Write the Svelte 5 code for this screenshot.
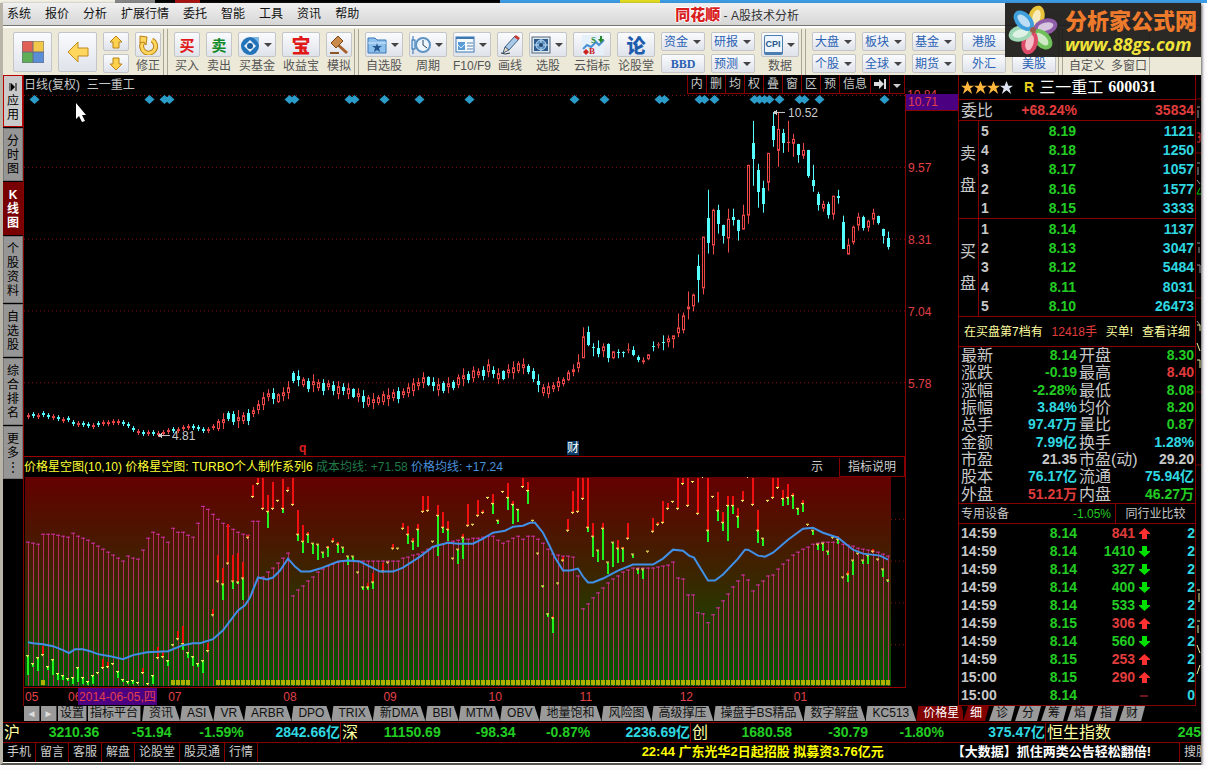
<script>
    const menus = ["系统", "报价", "分析", "扩展行情", "委托", "智能", "工具", "资讯", "帮助"];

    const tradeTools = [
        { icon: "buy", label: "买入" },
        { icon: "sell", label: "卖出" },
        { icon: "fund", label: "买基金", wide: true, drop: true },
        { icon: "bao", label: "收益宝", wide: true },
        { icon: "hammer", label: "模拟" },
    ];
    const viewTools = [
        { icon: "folder", label: "自选股", wide: true, drop: true },
        { icon: "clock", label: "周期", wide: true, drop: true },
        { icon: "news", label: "F10/F9", wide: true, drop: true },
        { icon: "pen", label: "画线" },
        { icon: "radar", label: "选股", wide: true, drop: true },
        { icon: "cloud", label: "云指标", wide: true },
        { icon: "lun", label: "论股堂", wide: true },
    ];
    const infoPairs = [
        [{ t: "资金", drop: true }, { t: "BBD", bold: true }],
        [{ t: "研报", drop: true }, { t: "预测", drop: true }],
    ];
    const marketPairs = [
        [{ t: "大盘", drop: true }, { t: "个股", drop: true }],
        [{ t: "板块", drop: true }, { t: "全球", drop: true }],
        [{ t: "基金", drop: true }, { t: "期货", drop: true }],
        [{ t: "港股" }, { t: "外汇" }],
        [{ t: "美股" }],
    ];

    const sideTabs = ["分时图", "K线图", "个股资料", "自选股", "综合排名", "更多⋮"];
    const chartButtons = ["内", "删", "均", "权", "叠", "窗", "区", "预", "信息"];
    const indicatorTabs = [
        "资讯", "ASI", "VR", "ARBR", "DPO", "TRIX", "新DMA", "BBI", "MTM", "OBV",
        "地量饱和", "风险图", "高级撑压", "操盘手BS精品", "数字解盘", "KC513", "价格星",
    ];
    const quoteTabs = ["细", "诊", "分", "筹", "焰", "指", "财"];

    const sells = [[5, "8.19", 1121], [4, "8.18", 1250], [3, "8.17", 1057], [2, "8.16", 1577], [1, "8.15", 3333]];
    const buys = [[1, "8.14", 1137], [2, "8.13", 3047], [3, "8.12", 5484], [4, "8.11", 8031], [5, "8.10", 26473]];

    const details = [
        ["最新", "8.14", "green", "开盘", "8.30", "green"],
        ["涨跌", "-0.19", "green", "最高", "8.40", "red"],
        ["涨幅", "-2.28%", "green", "最低", "8.08", "green"],
        ["振幅", "3.84%", "cyan", "均价", "8.20", "green"],
        ["总手", "97.47万", "cyan", "量比", "0.87", "green"],
        ["金额", "7.99亿", "cyan", "换手", "1.28%", "cyan"],
        ["市盈", "21.35", "grey", "市盈(动)", "29.20", "grey"],
        ["股本", "76.17亿", "cyan", "流通", "75.94亿", "cyan"],
        ["外盘", "51.21万", "red", "内盘", "46.27万", "green"],
    ];

    const ticks = [
        ["14:59", "8.14", 841, "up", 2],
        ["14:59", "8.14", 1410, "down", 2],
        ["14:59", "8.14", 327, "down", 2],
        ["14:59", "8.14", 400, "down", 2],
        ["14:59", "8.14", 533, "down", 2],
        ["14:59", "8.15", 306, "up", 2],
        ["14:59", "8.14", 560, "down", 2],
        ["14:59", "8.15", 253, "up", 2],
        ["15:00", "8.15", 290, "up", 2],
        ["15:00", "8.14", "", "flat", 0],
    ];

    const indexes = [
        ["沪", "3210.36", "-51.94", "-1.59%", "2842.66亿"],
        ["深", "11150.69", "-98.34", "-0.87%", "2236.69亿"],
        ["创", "1680.58", "-30.79", "-1.80%", "375.47亿"],
    ];
    const footLinks = ["手机", "留言", "客服", "解盘", "论股堂", "股灵通", "行情"];

    // price axis, y in plot units (plot starts at 94)
    const prices = [["9.57", 167], ["8.31", 239], ["7.04", 311], ["5.78", 383]];
    const months = [["05", 26], ["06", 69], ["07", 169], ["08", 284], ["09", 384], ["10", 489], ["11", 580], ["12", 680], ["01", 794]];
    const pct = (v, from, size) => `${((v - from) / size) * 100}%`;

    const px = (i) => 28 + i * 5;

    // quiet months: middle of each candle, negative when it closed down
    const quiet = [
        417, -416, 417, -415, -417, 418, -419, 421, -420, -424, 425, -425, -426, 427, -425, 424, 424, 423,
        423, -424, -426, -430, 433, -434, 434, -434, 435, 434, 432, -431, 431, 429, 428, -428, -429, -431,
        431, 428, 426, 422, -417, -419, 420, 419, -418, 413, 408, 402, 396, -397, 399, 395, 391, -378,
        -379, 383, -386, 384, 386, -388, 386, -389, 391, -390, 392, -394, 396, -400, 402, 402, 401, 399,
        398, 396, -396, 394, 391, 388, 385, 381, -382, -385, 388, -388, 386, -386, 382, 378, -378, 375,
        374, -374, 369, -373, 377, -376, 372, 371, 368, 367, -370, -376, -384, 391, 391, 388, 385,
    ].map((v, i) => {
        const y = Math.abs(v);
        const body = i < 38 ? 1 : 2 + (i % 3);
        const wick = i < 38 ? 3 : 5 + ((i * 7) % 5);
        return { up: v > 0, top: y - body, bottom: y + body, high: y - wick, low: y + wick };
    });

    // top bottom high low
    const busy = `r380 385 378 387|r373 381 371 382|r370 373 365 377|r363 369 355 373|r337 359 328 359|c333 346 327 347
|c348 349 344 357|c349 355 341 358|r347 352 344 358|c345 359 344 363|r352 359 352 360|c353 354 350 359|c353 354 352 358
|r350 351 344 354|c351 356 347 357|c358 361 356 363|r361 363 358 365|r355 360 355 361|c347 348 342 352|r345 346 343 349
|c343 344 336 351|r339 343 336 348|r336 340 336 349|r328 334 314 338|r316 331 313 334|r307 310 292 320|r295 307 294 312
|c266 281 255 303|r237 289 237 295|c218 243 190 254|r210 246 209 255|c210 224 205 234|c225 236 225 244|r219 239 209 253
|c217 220 209 226|c220 231 220 241|r215 230 205 230|r165 216 165 224|c143 159 121 186|c170 192 164 208|c188 204 181 213
|r153 183 153 191|c126 140 113 147|r129 151 113 167|c133 143 129 153|r142 143 121 152|r139 144 134 157|c144 155 144 163
|r150 156 143 159|c150 176 150 178|c180 186 165 192|c194 205 192 211|r204 209 201 212|c204 215 202 219|r196 215 196 220
|c196 198 190 204|c222 249 216 249|r245 255 239 255|r227 243 226 245|r217 226 213 231|c217 228 216 231|r221 228 220 232
|r213 220 209 225|c216 223 216 225|c229 236 229 244|c238 247 232 250`
        .split("|")
        .map((s) => {
            const [top, bottom, high, low] = s.trim().slice(1).split(" ").map(Number);
            return { up: s.trim()[0] === "r", top, bottom, high, low };
        });
    const candles = [...quiet, ...busy];

    const diamonds = [
        34, 149, 164, 169, 289, 294, 349, 354, 384, 419, 469, 574, 604, 659, 664, 699, 704, 714,
        754, 759, 764, 769, 779, 799, 804, 819, 884,
    ];

    // indicator values are kept in thirds of a unit
    const third = (v) => Math.round(v / 3);

    const cost = [
        260, 263, 266, 238, 238, 238, 241, 244, 247, 235, 244, 250, 256, 265, 274, 283, 292, 301, 310, 319,
        304, 310, 313, 286, 250, 230, 236, 247, 260, 220, 232, 232, 241, 247, 203, 154, 163, 178, 193, 205,
        214, 223, 232, 238, 241, 199, 197, 365, 352, 340, 325, 310, 295, 422, 406, 392, 377, 365, 352, 342,
        334, 328, 322, 319, 317, 317, 317, 317, 317, 317, 317, 317, 317, 317, 317, 310, 306, 301, 297, 290,
        282, 275, 269, 266, 262, 259, 256, 253, 253, 250, 250, 247, 244, 244, 256, 265, 259, 250, 244, 253,
        244, 244, 253, 265, 283, 298, 301, 304, 304, 307, 364, 463, 448, 430, 415, 400, 385, 373, 364, 352,
        344, 340, 340, 340, 340, 340, 337, 334, 331, 322, 370, 373, 421, 421, 475, 478, 505, 481, 460, 439,
        418, 397, 379, 361, 376, 409, 391, 379, 364, 361, 343, 328, 316, 301, 292, 283, 277, 268, 265, 262,
        262, 262, 262, 268, 271, 274, 280, 283, 286, 289, 292, 298, 304,
    ];

    // [bar, red from, mark, green to]
    const stars = [
        [0, 0, 607, 662], [1, 0, 629, 640], [2, 0, 613, 650], [3, 575, 602], [4, 0, 638, 647], [5, 0, 617, 662],
        [6, 0, 661, 677], [7, 0, 667, 677], [8, 0, 676, 682], [9, 0, 672, 690], [10, 0, 643, 684], [11, 0, 671, 690],
        [12, 0, 683, 692], [13, 0, 665, 690], [14, 0, 657], [15, 615, 643], [16, 625, 638], [17, 0, 629],
        [18, 0, 655, 671], [19, 0, 677, 683], [20, 0, 683, 690], [21, 0, 680, 690], [22, 0, 686], [23, 641, 658],
        [24, 0, 691], [25, 0, 667, 690], [26, 580, 613], [27, 595, 608], [28, 0, 622, 637], [29, 0, 572],
        [30, 530, 554], [31, 515, 570, 588], [32, 0, 596, 611], [33, 0, 610, 637], [34, 0, 631, 640],
        [35, 0, 622, 656], [36, 566, 592], [37, 466, 482], [38, 300, 382], [39, 340, 391, 437], [40, 208, 328],
        [41, 300, 382, 404], [42, 295, 384, 390], [43, 320, 371, 437], [44, 240, 250], [45, 90, 125], [46, 69, 88],
        [47, 69, 163], [48, 121, 172, 218], [49, 81, 163], [50, 0, 138], [51, 72, 163, 174], [52, 96, 108],
        [53, 69, 150], [54, 166, 239, 257], [55, 210, 262, 293], [56, 230, 241, 265], [57, 0, 267, 297],
        [58, 0, 271, 316], [59, 0, 295, 310], [60, 274, 278, 307], [61, 250, 262], [62, 260, 271, 293],
        [63, 0, 280, 293], [64, 0, 307, 331], [65, 0, 307, 316], [66, 0, 355], [67, 0, 400, 407], [68, 388, 398, 407],
        [69, 355, 385, 406], [71, 325, 352], [72, 0, 323], [73, 268, 281], [74, 0, 281], [75, 205, 223],
        [76, 214, 241, 268], [77, 249, 262, 286], [78, 208, 226, 277], [79, 123, 172], [80, 123, 167], [81, 0, 262],
        [82, 150, 184, 302], [83, 171, 220, 235], [84, 198, 226, 257], [85, 0, 313], [86, 0, 286, 328],
        [87, 238, 248, 313], [88, 148, 214], [89, 0, 211], [90, 136, 184], [91, 166, 175], [92, 0, 130],
        [93, 118, 146, 176], [94, 0, 197, 208], [95, 0, 112], [96, 85, 130, 166], [97, 137, 150, 208],
        [98, 0, 166, 202], [99, 69, 97], [100, 82, 109, 146], [101, 0, 197], [102, 0, 296], [103, 0, 395, 400],
        [104, 0, 481, 490], [105, 486, 493, 537], [106, 0, 388], [107, 305, 319], [108, 192, 227], [109, 108, 175],
        [110, 69, 172], [111, 69, 133], [112, 69, 220, 230], [113, 205, 247, 307], [114, 0, 289, 322],
        [115, 205, 223, 316], [116, 0, 325, 358], [117, 0, 265, 335], [118, 256, 283, 325], [119, 275, 283, 322],
        [120, 205, 253], [121, 0, 301, 310], [122, 0, 344, 358], [123, 0, 344, 371], [124, 0, 292], [125, 190, 232],
        [126, 200, 211], [127, 138, 205], [128, 145, 163], [129, 0, 142], [130, 69, 163], [131, 69, 88],
        [132, 69, 152], [133, 0, 82], [134, 69, 178], [135, 0, 67], [136, 69, 227, 260], [137, 0, 125],
        [138, 112, 167, 197], [139, 172, 205, 227], [140, 124, 152, 257], [141, 124, 154, 176], [142, 158, 187, 220],
        [143, 108, 139], [144, 0, 67], [145, 69, 151], [146, 166, 227, 263], [147, 0, 253, 274], [148, 0, 137],
        [149, 69, 128], [150, 69, 100], [151, 105, 133, 154], [152, 87, 130, 151], [153, 115, 124, 163],
        [154, 0, 161, 179], [155, 136, 148, 170], [156, 0, 209], [157, 0, 229, 241], [158, 0, 271, 284],
        [159, 0, 268, 287], [160, 0, 292, 301], [161, 0, 250], [162, 242, 256, 268], [163, 0, 368],
        [164, 347, 361, 382], [165, 0, 319, 361], [166, 0, 298], [167, 0, 319, 328], [168, 0, 304, 328],
        [169, 282, 290], [170, 0, 315], [171, 0, 346, 365], [172, 0, 377, 385],
    ];

    const average = [
        [28, 564], [33, 568], [43, 571], [53, 576], [63, 588], [69, 598], [75, 586], [83, 584], [90, 590], [98, 601],
        [110, 607], [123, 615], [133, 602], [147, 594], [168, 590], [183, 573], [193, 567], [200, 566], [213, 556],
        [223, 527], [238, 469], [245, 454], [250, 430], [258, 369], [267, 375], [273, 370], [280, 347], [288, 311],
        [295, 337], [301, 351], [310, 351], [320, 341], [338, 322], [348, 317], [360, 322], [370, 337], [380, 352],
        [393, 352], [403, 338], [420, 306], [433, 277], [448, 263], [458, 267], [473, 266], [483, 253], [493, 233],
        [505, 228], [513, 217], [523, 212], [530, 204], [535, 205], [543, 233], [550, 275], [555, 310], [563, 349],
        [570, 347], [578, 342], [583, 367], [588, 384], [593, 384], [603, 373], [618, 349], [633, 331], [653, 329],
        [663, 311], [673, 285], [683, 289], [689, 302], [694, 310], [700, 340], [708, 377], [715, 378], [723, 360],
        [738, 312], [745, 286], [748, 285], [758, 304], [765, 305], [773, 294], [788, 256], [803, 223], [813, 218],
        [823, 233], [838, 250], [853, 284], [863, 297], [880, 304], [888, 316],
    ]
        .map(([x, v]) => `${x},${third(v)}`)
        .join(" ");

    const blocks = cost.map((_, i) => i).filter((i) => i === 3 || (i > 28 && i < 33) || i > 37);
    const petals = ["#e8c33c", "#8f5ca8", "#6fbf5a", "#dc4a68", "#9fd8b4", "#3f9fdc"];
</script>

{#snippet icon(name)}
    {#if name === "buy"}
        <b class="hanzi red-ink">买</b>
    {:else if name === "sell"}
        <b class="hanzi green-ink">卖</b>
    {:else if name === "lun"}
        <b class="hanzi big blue-ink">论</b>
    {:else if name === "bao"}
        <b class="hanzi big red-ink">宝</b>
    {:else}
        <svg class="icon" viewBox="0 0 20 20" aria-hidden="true">
            {#if name === "fund"}
                <circle cx="10" cy="11" r="9" fill="#2374b8" />
                <path d="M10 5l6 6-6 6-6-6z" fill="#e8f2fb" />
                <circle cx="10" cy="11" r="3" fill="#1b5f9f" />
                <path d="M13 2h6v6z" fill="#7db8e6" />
            {:else if name === "hammer"}
                <path d="M8 9l10 9" stroke="#a5602c" stroke-width="3" />
                <path d="M2 8l7-7 5 5-7 7z" fill="#c98a4b" stroke="#7d4718" />
                <path d="M1 18h9" stroke="#8c5525" stroke-width="2" />
            {:else if name === "folder"}
                <path d="M1 3h7l2 2h9v13H1z" fill="#8fc1ee" stroke="#3d78b5" />
                <path d="M1 8h18" stroke="#d8ebfb" />
                <path d="M10 8l1 3h4l-3 2 1 4-3-2-3 2 1-4-3-2h4z" fill="#24558c" />
            {:else if name === "clock"}
                <path d="M2 1v18" stroke="#2a6cab" />
                <rect x="1" y="5" width="3" height="9" fill="#cfe5f8" stroke="#2a6cab" />
                <circle cx="12" cy="10" r="7" fill="#eef6fd" stroke="#5f93c4" stroke-width="2" />
                <path d="M12 5v5l4 3" fill="none" stroke="#27425c" />
            {:else if name === "news"}
                <rect x="1" y="2" width="18" height="15" fill="#f5faff" stroke="#3d78b5" />
                <path d="M1 3h18" stroke="#3d78b5" stroke-width="2" />
                <path d="M3 7h7v8H3z" fill="#5b9bd5" />
                <path d="M3 10l3 3 4-4" stroke="#d8ebfb" fill="none" />
                <path d="M12 8h6M12 11h6M12 14h6" stroke="#5a82aa" />
            {:else if name === "pen"}
                <path d="M5 12L15 1l4 3L9 15z" fill="#a9c9e6" stroke="#3b5f85" />
                <path d="M14 2l2-2 4 3-2 2z" fill="#cc3a34" />
                <path d="M5 12l-2 6 6-3z" fill="#f2ddb8" stroke="#3b5f85" />
                <path d="M1 18q4 2 9 0" stroke="#333" fill="none" />
            {:else if name === "radar"}
                <rect x="1" y="2" width="18" height="16" fill="#dfe7ef" stroke="#54687d" />
                <rect x="3" y="4" width="14" height="12" fill="#2d5d8f" />
                <circle cx="10" cy="10" r="5" fill="#5c93c7" stroke="#bcd8f0" />
                <path d="M10 4v12M3 10h14" stroke="#bcd8f0" />
                <circle cx="10" cy="10" r="2" fill="#24466b" />
            {/if}
        </svg>
    {/if}
{/snippet}

{#snippet tool(t)}
    <div class="tool">
        <button class="key" class:wide={t.wide} aria-label={t.label}>
            <span class="face">
                {#if t.icon === "cloud"}
                    <svg class="icon cloud" viewBox="0 0 30 20" aria-hidden="true">
                        <rect x="5" width="22" height="20" fill="#e6f0fa" />
                        <path d="M6 14l4-4 4 2 5-5 3 3 5-5" fill="none" stroke="#4a8fd0" stroke-width="2" />
                        <text x="14" y="8">S</text>
                        <text class="b" x="12" y="19">B</text>
                        <path d="M21 4h2V1h2v3h2l-3 4z" fill="#2a8a2a" />
                        <path d="M6 17l3-3 3 3-3 3z" fill="#c22" />
                    </svg>
                {:else}
                    {@render icon(t.icon)}
                {/if}
            </span>
            {#if t.drop}<i class="drop"></i>{/if}
        </button>
        <span class="caption">{t.label}</span>
    </div>
{/snippet}

{#snippet pair(items)}
    <div class="pair">
        {#each items as p}
            <button class="key text" class:bold={p.bold}>
                <span class="face">{p.t}</span>
                {#if p.drop}<i class="drop"></i>{/if}
            </button>
        {/each}
    </div>
{/snippet}

{#snippet book(title, rows)}
    <table class="book">
        <tbody>
            {#each rows as [level, price, volume], i}
                <tr>
                    {#if i === 0}
                        <th class="side" rowspan="5">{title[0]}<br />{title[1]}</th>
                    {/if}
                    <td class="grey">{level}</td>
                    <td class="green num">{price}</td>
                    <td class="cyan num">{volume}</td>
                </tr>
            {/each}
        </tbody>
    </table>
{/snippet}

<div class="strip"></div>
<div class="window">
    <header class="menubar">
        <nav>
            {#each menus as m}<button>{m}</button>{/each}
        </nav>
        <h1><em>同花顺</em> - A股技术分析</h1>
    </header>

    <div class="toolbar">
        <button class="key home" aria-label="首页">
            <svg viewBox="0 0 22 22" aria-hidden="true">
                <path d="M0 0h11v11H0z" fill="#e06055" /><path d="M11 0h11v11H11z" fill="#f2c84b" />
                <path d="M0 11h11v11H0z" fill="#5fae57" /><path d="M11 11h11v11H11z" fill="#5a8fd6" />
                <path d="M0 0h22v22H0zM11 0v22M0 11h22" fill="none" stroke="#6d6d80" />
            </svg>
        </button>
        <button class="key home" aria-label="后退">
            <svg viewBox="0 0 22 22" aria-hidden="true">
                <path d="M1 11L11 1v6h10v8H11v6z" fill="#ffd75e" stroke="#c08a1e" />
            </svg>
        </button>
        <div class="pair small">
            <button class="key" aria-label="上一只">
                <svg viewBox="0 0 14 14" aria-hidden="true"><path d="M7 1l6 6h-3v6H4V7H1z" fill="#ffd24d" stroke="#b98216" /></svg>
            </button>
            <button class="key" aria-label="下一只">
                <svg viewBox="0 0 14 14" aria-hidden="true"><path d="M7 13l6-6h-3V1H4v6H1z" fill="#ffd24d" stroke="#b98216" /></svg>
            </button>
        </div>
        <div class="tool">
            <button class="key" aria-label="修正">
                <svg class="icon" viewBox="0 0 20 20" aria-hidden="true">
                    <path d="M5 7a7 7 0 1 0 9-2" fill="none" stroke="#b98216" stroke-width="5" />
                    <path d="M5 7a7 7 0 1 0 9-2" fill="none" stroke="#ffd75e" stroke-width="3" />
                    <path d="M2 1l7 1-1 8-2-3-4 1z" fill="#ffd75e" stroke="#b98216" />
                </svg>
            </button>
            <span class="caption">修正</span>
        </div>
        <i class="grip"></i>
        {#each tradeTools as t}{@render tool(t)}{/each}
        <i class="grip"></i>
        {#each viewTools as t}{@render tool(t)}{/each}
        {#each infoPairs as p}{@render pair(p)}{/each}
        <div class="tool">
            <button class="key wide" aria-label="数据">
                <span class="face"><b class="cpi">CPI</b></span><i class="drop"></i>
            </button>
            <span class="caption">数据</span>
        </div>
        <i class="grip"></i>
        {#each marketPairs as p}{@render pair(p)}{/each}
        <i class="grip"></i>
        <div class="tool low"><span class="caption">自定义</span></div>
        <div class="tool low"><span class="caption">多窗口</span></div>
        <i class="grip end"></i>
    </div>

    <div class="watermark">
        <svg viewBox="0 0 52 52" aria-hidden="true">
            {#each petals as color, i}
                <g transform="rotate({15 + i * 60} 26 26)">
                    <ellipse cx="26" cy="13" rx="8" ry="12" fill={color} />
                    <ellipse cx="26" cy="13" rx="4" ry="8" fill="#fff" opacity="0.65" />
                </g>
            {/each}
            <circle cx="26" cy="26" r="3" fill="#9b5a4a" />
        </svg>
        <div>
            <strong>分析家公式网</strong>
            <a href="#site">www.88gs.com</a>
        </div>
    </div>

    <main>
        <nav class="side-tabs">
            <button class="apps">
                <svg viewBox="0 0 8 8" aria-hidden="true"><path d="M1 0v8M7 0v8" stroke="#000" /><path d="M2 0l4 4-4 4z" /></svg>
                应用
            </button>
            {#each sideTabs as t}
                <button class:active={t === "K线图"}>{t}</button>
            {/each}
        </nav>

        <section class="charts">
            <div class="chart-head">
                <h2>日线(复权) &nbsp;三一重工</h2>
                <div class="chart-buttons">
                    {#each chartButtons as b}<button>{b}</button>{/each}
                    <button aria-label="移到最后">
                        <svg viewBox="0 0 12 12" aria-hidden="true"><path d="M0 4h5V1l5 5-5 5V8H0zM10 1h2v10h-2z" fill="#ddd" /></svg>
                    </button>
                    <button aria-label="更多"><i class="drop light"></i></button>
                </div>
            </div>
            <div class="axis top"><span>10.84</span></div>

            <div class="plot">
                <svg viewBox="24 94 881 363" preserveAspectRatio="none" shape-rendering="crispEdges" role="img" aria-label="日K线">
                    <path class="grid" d="M24 95.5h881" />
                    {#each prices as [, y]}<path class="grid" d="M24 {y + 0.5}h881" />{/each}
                    {#each diamonds as x}
                        <path d="M{x + 0.5} 95l5 4.5-5 4.5-5-4.5z" fill="#2b9cc8" shape-rendering="auto" />
                    {/each}
                    {#each candles as c, i}
                        {#if c.up}
                            <path class="up" d="M{px(i) + 0.5} {c.high}V{c.top}M{px(i) + 0.5} {c.bottom}V{c.low}" />
                            <rect class="up" x={px(i) - 0.5} y={c.top + 0.5} width="2" height={Math.max(c.bottom - c.top - 1, 0.1)} />
                        {:else}
                            <path class="down" d="M{px(i) + 0.5} {c.high}V{c.low}" />
                            <rect class="solid" x={px(i) - 1} y={c.top} width="3" height={c.bottom - c.top} />
                        {/if}
                    {/each}
                    <path d="M774 112.5h11M159 436.5h11" stroke="#ccc" />
                    <path d="M773 112.5l4-3v6zM158 436.5l4-3v6z" fill="#ccc" />
                </svg>
                <span class="note" style:left={pct(788, 24, 881)} style:top={pct(106, 94, 363)}>10.52</span>
                <span class="note" style:left={pct(172, 24, 881)} style:top={pct(430, 94, 363)}>4.81</span>
                <b class="note q" style:left={pct(299, 24, 881)} style:top={pct(442, 94, 363)}>q</b>
                <span class="note cai" style:left={pct(567, 24, 881)} style:top={pct(442, 94, 363)}>财</span>
                <svg class="pointer" style:left={pct(75, 24, 881)} style:top={pct(102, 94, 363)} viewBox="0 0 12 21" aria-hidden="true">
                    <path d="M1 1v16l3-3 3 6 3-1-3-6h4z" fill="#fff" />
                </svg>
            </div>
            <div class="axis">
                <span class="current">10.71</span>
                {#each prices as [label, y]}
                    <span class="tick" style:top={pct(y - 6, 94, 363)}>{label}</span>
                {/each}
            </div>

            <div class="indicator-head">
                <p>
                    价格星空图(10,10) 价格星空图: TURBO个人制作系列6
                    <span class="dim">成本均线: +71.58</span>
                    <span class="blue">价格均线: +17.24</span>
                </p>
                <span class="cut">示</span>
                <button>指标说明</button>
            </div>
            <div class="axis"></div>

            <div class="plot indicator">
                <svg viewBox="24 22 881 211" preserveAspectRatio="none" shape-rendering="crispEdges" role="img" aria-label="价格星空图">
                    <defs>
                        <linearGradient id="sky" x1="0" x2="0" y1="0" y2="1">
                            <stop offset="0" stop-color="#640000" />
                            <stop offset="0.5" stop-color="#382800" />
                            <stop offset="1" stop-color="#005c00" />
                        </linearGradient>
                    </defs>
                    {#each [64, 106, 148, 190] as y}<path class="grid" d="M891 {y + 0.5}h14" />{/each}
                    <rect x="25" y="22" width="866" height="210" fill="url(#sky)" />
                    {#each cost as v, i}
                        <path class="stem" d="M{px(i) + 0.5} {third(v)}V232" />
                        <path class="cap" d="M{px(i) - 2} {third(v) + 0.5}h4" />
                    {/each}
                    {#each stars as [i, from, mark, to]}
                        {#if from}<path class="hot" d="M{px(i)} {third(from)}V{third(mark)}" />{/if}
                        {#if to}<path class="cool" d="M{px(i)} {third(mark)}V{third(to)}" />{/if}
                        <path class="mark" d="M{px(i) - 2} {third(mark) - 0.5}h3M{px(i) - 1} {third(mark) + 0.5}h1" />
                    {/each}
                    {#each blocks as i}<rect x={px(i) - 2} y="226" width="4" height="5" fill="#b0b000" />{/each}
                    <polyline points={average} shape-rendering="auto" />
                </svg>
            </div>
            <div class="axis"></div>

            <div class="months">
                {#each months as [label, x]}
                    <span style:left={pct(x, 25, 933)}>{label}</span>
                {/each}
                <span class="picked" style:left={pct(79, 25, 933)}>2014-06-05,四</span>
            </div>
        </section>

        <aside class="quote">
            <div class="stock">
                <span class="stars">
                    {#each [1, 2, 3, 4] as n}
                        <svg viewBox="0 0 14 14" aria-hidden="true">
                            <path d="M7 0l2 5h5l-4 3 2 6-5-4-5 4 2-6-4-3h5z" fill={n < 4 ? "#ffb83d" : "#dde3f0"} />
                        </svg>
                    {/each}
                </span>
                <b class="r">R</b>
                <h2>三一重工</h2>
                <b class="code">600031</b>
            </div>
            <div class="ratio">
                <span>委比</span><b class="red">+68.24%</b><b class="red">35834</b>
            </div>
            {@render book("卖盘", sells)}
            {@render book("买盘", buys)}
            <div class="hint">
                <span>在买盘第7档有</span><span class="red">12418手</span><span>买单!</span><a href="#detail">查看详细</a>
            </div>
            <table class="details">
                <tbody>
                    {#each details as [a, av, ac, b, bv, bc]}
                        <tr><th>{a}</th><td class={ac}>{av}</td><th>{b}</th><td class={bc}>{bv}</td></tr>
                    {/each}
                </tbody>
            </table>
            <div class="sector">
                <span>专用设备</span><span class="green">-1.05%</span><button>同行业比较</button>
            </div>
            <table class="ticks">
                <tbody>
                    {#each ticks as [time, price, volume, dir, count]}
                        <tr>
                            <td class="grey">{time}</td>
                            <td class="green num">{price}</td>
                            <td class="num" class:red={dir === "up"} class:green={dir === "down"}>{volume}</td>
                            <td class="dir">
                                <svg viewBox="0 0 11 11" aria-hidden="true">
                                    {#if dir === "up"}
                                        <path d="M5.500 0L11 5v1H8v5H3V6H0V5z" fill="#ff3030" />
                                    {:else if dir === "down"}
                                        <path d="M5.500 11L11 6V5H8V0H3v5H0v1z" fill="#00e000" />
                                    {:else}
                                        <path d="M1 6h8" stroke="#e03030" />
                                    {/if}
                                </svg>
                            </td>
                            <td class="cyan num">{count}</td>
                        </tr>
                    {/each}
                </tbody>
            </table>
        </aside>

        <div class="edge">
            <svg viewBox="0 0 5 630" aria-hidden="true">
                <path d="M0 24h5M0 78h5M0 223h5M0 317h5M0 390h5" stroke="#700" />
                <path d="M1 32h3M2 35v8M1 88h3M2 92v8M1 105l3 4M1 168h3M3 172v6M1 190h3v8M1 246l3 4" stroke="#999" fill="none" />
                <path d="M1 58h3v4H2h2v5H1" stroke="#d33" fill="none" />
                <path d="M4 113l-3 6h4" stroke="#0c0" fill="none" />
                <path d="M1 250h3v6M1 268l3 8M1 285h3v8M1 515h3M3 518v9M1 546h3M2 550v8M1 570l3 8M4 590l-3 9" stroke="#ee9" fill="none" />
            </svg>
        </div>
    </main>

    <div class="tab-row">
        <div class="tabs">
            <button class="box arrow" aria-label="向左">◄</button>
            <button class="box arrow" aria-label="向右">►</button>
            <button class="box">设置</button>
            <button class="box">指标平台</button>
            {#each indicatorTabs as t}
                <button class="tab" class:active={t === "价格星"}>{t}</button>
            {/each}
        </div>
        <div class="tabs right">
            {#each quoteTabs as t}
                <button class="tab" class:active={t === "细"}>{t}</button>
            {/each}
        </div>
    </div>

    <div class="indexes">
        {#each indexes as [name, value, change, rate, amount]}
            <div class="index">
                <span><i>{name}</i>{value}</span><span>{change}</span><span>{rate}</span><span class="cyan">{amount}</span>
            </div>
        {/each}
        <div class="index last"><span><i>恒生指数</i></span><span>245</span></div>
    </div>

    <footer>
        {#each footLinks as l}<a href="#{l}">{l}</a>{/each}
        <p class="ticker">22:44 广东光华2日起招股 拟募资3.76亿元</p>
        <p class="promo">【大数据】抓住两类公告轻松翻倍!</p>
        <a class="search" href="#search">搜股</a>
    </footer>
</div>

<style>
    :global(body) {
        background: #fdfbfd;
        font: 12px/14px "Liberation Sans", "Noto Sans CJK SC", sans-serif;
        overflow: hidden;
    }

    button {
        font: inherit;
        color: inherit;
        background: none;
        border: 0;
        margin: 0;
        padding: 0;
        white-space: nowrap;
    }

    a {
        color: inherit;
        text-decoration: none;
    }

    h1,
    h2,
    p {
        margin: 0;
        font: inherit;
    }

    i,
    em {
        font-style: normal;
    }

    table {
        border-spacing: 0;
        width: 100%;
    }

    th,
    td {
        padding: 0;
        text-align: left;
    }

    svg {
        display: block;
    }

    .red {
        color: #e03c3c;
    }

    .green {
        color: #22cc22;
    }

    .cyan {
        color: #2fd8e0;
    }

    .grey {
        color: #c8c8c8;
    }

    .num {
        text-align: right;
    }

    .strip {
        height: 3px;
        background: linear-gradient(90deg, #f4f2e6 0 115px, #888 115px 155px, #000 155px 175px, #a11 175px 200px, #000 200px 500px, #3a9de8 500px 620px, #e3dd20 620px 660px, #3a9de8 660px);
    }

    .window {
        position: relative;
        margin-right: 6px;
        border-left: 3px solid #b8b5a8;
        border-bottom: 2px solid #55564e;
        background: #000;
        box-shadow: 1px 1px 3px #555;
    }

    .menubar {
        display: flex;
        height: 22px;
        align-items: center;
        background: linear-gradient(#f0f0f0, #d6d6d6);
        border-bottom: 1px solid #77776e;
    }

    .menubar nav {
        display: flex;
        gap: 14px;
        padding-left: 4px;
        color: #111;
    }

    .menubar h1 {
        flex: 1;
        padding-right: 86px;
        text-align: center;
        color: #333;
    }

    .menubar em {
        color: #d81e1e;
        font: 900 15px/16px "Noto Sans CJK SC", sans-serif;
        text-shadow: 1px 0 #fff, -1px 0 #fff, 0 1px #fff, 0 -1px #fff;
    }

    .toolbar {
        display: flex;
        box-sizing: border-box;
        height: 49px;
        padding: 4px 0 0 10px;
        gap: 6px;
        background: #ece9d8;
        border-top: 2px solid #fff;
        overflow: hidden;
    }

    .key {
        display: flex;
        flex: none;
        box-sizing: border-box;
        width: 26px;
        height: 25px;
        align-items: center;
        justify-content: center;
        background: linear-gradient(#fafbfd, #dfe3ea);
        border: 1px solid #c3c5c8;
        border-radius: 2px;
    }

    .key.wide {
        width: 38px;
    }

    .key.home {
        width: 39px;
        height: 40px;
    }

    .home svg {
        width: 22px;
    }

    .key.text {
        width: 44px;
        height: 19px;
        color: #2a62b4;
    }

    .key.bold {
        font: bold 12px/14px "Liberation Serif", serif;
    }

    .face {
        display: flex;
        flex: 1;
        justify-content: center;
    }

    .key .drop {
        margin: 0 3px;
    }

    .drop {
        display: inline-block;
        border: 4px solid transparent;
        border-top-color: #444;
        border-bottom: 0;
    }

    .drop.light {
        border-top-color: #ccc;
    }

    .icon {
        width: 20px;
        height: 20px;
    }

    .icon.cloud {
        width: 30px;
    }

    .cloud text {
        font: bold 9px "Liberation Serif", serif;
        fill: #2a8a2a;
    }

    .cloud .b {
        fill: #c22;
    }

    .hanzi {
        font: bold 15px/20px "Noto Sans CJK SC", sans-serif;
    }

    .hanzi.big {
        font-weight: 900;
        font-size: 19px;
    }

    .red-ink {
        color: #e01818;
    }

    .green-ink {
        color: #108a28;
    }

    .blue-ink {
        color: #1f5cae;
    }

    .cpi {
        padding: 2px 1px;
        font-size: 9px;
        line-height: 12px;
        color: #27598f;
        background: #eef5fc;
        border: 1px solid #4c7db0;
        border-bottom-width: 3px;
        border-radius: 2px;
    }

    .tool {
        display: flex;
        flex: none;
        flex-direction: column;
        align-items: center;
        gap: 2px;
        white-space: nowrap;
        color: #555;
    }

    .tool.low {
        justify-content: flex-end;
        padding-bottom: 2px;
    }

    .caption {
        line-height: 14px;
    }

    .pair {
        display: flex;
        flex: none;
        flex-direction: column;
        justify-content: flex-end;
        height: 41px;
        gap: 3px;
    }

    .pair.small .key {
        height: 19px;
    }

    .small svg {
        width: 14px;
    }

    .grip {
        flex: none;
        width: 3px;
        margin: -3px 0 0 -4px;
        border-left: 1px solid #a9a698;
        border-right: 1px solid #a9a698;
    }

    .grip.end {
        border-right: 0;
    }

    .watermark {
        position: absolute;
        top: 0;
        right: 0;
        display: flex;
        box-sizing: border-box;
        width: 196px;
        height: 54px;
        align-items: center;
        gap: 6px;
        padding-left: 2px;
        background: rgba(28, 26, 24, 0.93);
    }

    .watermark svg {
        width: 52px;
    }

    .watermark strong {
        display: block;
        font: 900 22px/28px "Noto Sans CJK SC", sans-serif;
        color: #ee7a2c;
        white-space: nowrap;
    }

    .watermark a {
        display: block;
        font: italic bold 18px/22px "Open Sans", sans-serif;
        color: #f0e43a;
    }

    main {
        display: grid;
        grid-template-columns: 20px 1fr 238px 5px;
        height: 631px;
    }

    .side-tabs {
        display: flex;
        flex-direction: column;
        gap: 1px;
    }

    .side-tabs button {
        box-sizing: border-box;
        width: 20px;
        padding: 5px 3px 4px;
        white-space: normal;
        word-break: break-all;
        background: #969696;
        color: #000;
        border: 1px solid #777;
    }

    .side-tabs .apps {
        background: #c9c9c9;
        border-color: #b00;
    }

    .apps svg {
        width: 8px;
        margin: 2px auto 3px;
    }

    .side-tabs .active {
        background: #780000;
        border-color: #780000;
        color: #fff;
        font-weight: bold;
    }

    .charts {
        display: grid;
        grid-template-columns: 1fr 53px;
        grid-template-rows: 19px 363px 20px 211px 18px;
        border-left: 1px solid #800;
    }

    .chart-head {
        display: flex;
        justify-content: space-between;
        border-right: 1px solid #800;
        color: #c8c8c8;
    }

    .chart-head h2 {
        line-height: 20px;
    }

    .chart-buttons {
        display: flex;
    }

    .chart-buttons button {
        padding: 0 3px;
        border-left: 1px solid #800;
        border-bottom: 1px solid #800;
    }

    .chart-buttons svg {
        width: 12px;
    }

    .axis {
        position: relative;
        border-left: 1px solid #800;
        color: #e04048;
    }

    .axis.top {
        border: 0;
        overflow: hidden;
    }

    .axis.top span {
        display: block;
        padding: 13px 0 0 2px;
    }

    .tick {
        position: absolute;
        left: 2px;
    }

    .current {
        display: block;
        padding: 1px 2px;
        background: #4b0082;
        border-bottom: 1px solid #800;
    }

    .plot {
        position: relative;
        border-bottom: 1px solid #900;
    }

    .plot > svg:first-child {
        width: 100%;
        height: 100%;
    }

    .grid {
        stroke: #8a1010;
        stroke-dasharray: 1 3;
        fill: none;
    }

    .up {
        stroke: #f04848;
        fill: none;
    }

    .down {
        stroke: #5ff;
    }

    .solid {
        fill: #5ff;
    }

    .note {
        position: absolute;
        color: #ccc;
    }

    .q {
        color: #e02020;
    }

    .cai {
        background: #0d3d66;
        color: #fff;
    }

    .pointer {
        position: absolute;
        width: 12px;
    }

    .indicator-head {
        display: flex;
        align-items: center;
        color: #ff3;
        border-right: 1px solid #800;
    }

    .indicator-head p {
        flex: 1;
        white-space: nowrap;
    }

    .dim {
        color: #207848;
    }

    .blue {
        color: #4a90dc;
    }

    .cut {
        padding-right: 16px;
        color: #ccc;
    }

    .indicator-head button {
        padding: 2px 8px;
        color: #ccc;
        border-left: 1px solid #800;
        border-bottom: 1px solid #800;
    }

    .stem {
        stroke: #b82c60;
    }

    .cap {
        stroke: #d030b0;
    }

    .hot {
        stroke: #f01010;
        stroke-width: 2;
    }

    .cool {
        stroke: #20f020;
        stroke-width: 2;
    }

    .mark {
        stroke: #ffff60;
    }

    polyline {
        fill: none;
        stroke: #4090e8;
        stroke-width: 2;
    }

    .months {
        position: relative;
        grid-column: 1 / -1;
        color: #e04048;
    }

    .months span {
        position: absolute;
        top: 2px;
    }

    .months .picked {
        top: 0;
        padding: 2px 1px 1px;
        background: #4b0082;
    }

    .quote {
        box-sizing: border-box;
        border: solid #800;
        border-width: 0 1px 1px 1px;
        color: #c8c8c8;
        font-size: 14px;
    }

    .stock {
        display: flex;
        height: 24px;
        align-items: center;
        gap: 5px;
        padding-left: 2px;
        color: #fff;
        border-bottom: 1px solid #800;
    }

    .stars {
        display: flex;
        padding-right: 6px;
    }

    .stars svg {
        width: 13px;
    }

    .r {
        color: #e8d020;
    }

    .stock h2,
    .ratio span,
    th {
        font-weight: normal;
        font-size: 16px;
        line-height: 17px;
    }

    .code {
        font: bold 16px "Liberation Serif", serif;
    }

    .ratio {
        display: grid;
        grid-template-columns: 34px 82px 1fr;
        height: 20px;
        align-items: center;
        padding: 0 1px 0 2px;
        text-align: right;
        border-bottom: 1px solid #800;
    }

    .ratio span {
        text-align: left;
    }

    .book {
        height: 98px;
        font-weight: bold;
        border-bottom: 1px solid #800;
    }

    .book th {
        width: 18px;
        padding-left: 1px;
        line-height: 32px;
        border-right: 1px solid #800;
    }

    .book td:nth-last-child(3) {
        width: 26px;
        padding-left: 2px;
    }

    .book td:nth-last-child(2) {
        width: 69px;
    }

    .book td:last-child {
        padding-right: 1px;
    }

    .hint {
        display: flex;
        height: 29px;
        align-items: center;
        justify-content: space-between;
        padding: 0 5px;
        font-size: 12px;
        color: #ffffa0;
        border-bottom: 1px solid #800;
    }

    .details {
        height: 157px;
        border-bottom: 1px solid #800;
        table-layout: fixed;
    }

    .details th {
        width: 36px;
        padding-left: 2px;
        white-space: nowrap;
    }

    .details th:nth-child(3) {
        width: 60px;
    }

    .details td {
        width: 80px;
        font-weight: bold;
        text-align: right;
        line-height: 17px;
        white-space: nowrap;
    }

    .details td:last-child {
        width: auto;
        padding-right: 1px;
    }

    .sector {
        display: grid;
        grid-template-columns: 60px 1fr 80px;
        height: 19px;
        align-items: center;
        padding-left: 2px;
        font-size: 12px;
        border-bottom: 1px solid #800;
    }

    .sector .green {
        padding-right: 4px;
        text-align: right;
    }

    .sector button {
        height: 19px;
        border-left: 1px solid #800;
    }

    .ticks {
        font-weight: bold;
    }

    .ticks td {
        height: 18px;
        width: 58px;
    }

    .ticks td:first-child {
        padding-left: 2px;
    }

    .ticks .dir {
        width: 12px;
        padding-left: 4px;
    }

    .dir svg {
        width: 11px;
    }

    .ticks td:last-child {
        width: auto;
    }

    .edge svg {
        width: 5px;
    }

    .tab-row {
        display: grid;
        grid-template-columns: 1fr 238px;
        height: 16px;
        padding-left: 21px;
        border-bottom: 1px solid #800;
    }

    .tabs {
        display: flex;
        height: 15px;
        overflow: hidden;
    }

    .tabs button {
        flex: none;
        background: #9a9a9a;
        color: #111;
        line-height: 15px;
    }

    .tabs .box {
        padding: 0 2px;
        margin-right: 1px;
        border-right: 1px solid #444;
    }

    .tabs .arrow {
        width: 16px;
        color: #ddd;
        font-size: 10px;
    }

    .tabs .tab {
        padding: 0 7px;
        clip-path: polygon(2px 0, calc(100% - 5px) 0, 100% 100%, 0 100%);
    }

    .tabs .active {
        background: #800000;
        color: #fff;
    }

    .right .tab {
        clip-path: polygon(5px 0, 100% 0, calc(100% - 4px) 100%, 0 100%);
    }

    .indexes {
        display: grid;
        grid-template-columns: 338fr 350fr 355fr 155fr;
        height: 19px;
        border-bottom: 1px solid #800;
        overflow: hidden;
    }

    .index {
        display: grid;
        grid-template-columns: 4fr 3fr 3fr 4fr;
        border-right: 1px solid #800;
        font-weight: bold;
        font-size: 14px;
        line-height: 19px;
        color: #22cc22;
        text-align: right;
        white-space: nowrap;
    }

    .index i {
        float: left;
        padding-left: 1px;
        font-weight: normal;
        font-size: 16px;
        color: #ffffa0;
    }

    .index .cyan {
        color: #2fd8e0;
    }

    .index.last {
        grid-template-columns: 1fr auto;
        border: 0;
        text-align: left;
    }

    footer {
        display: flex;
        height: 19px;
        line-height: 18px;
        color: #ccc;
        border-bottom: 1px solid #fff;
        overflow: hidden;
        white-space: nowrap;
    }

    footer a {
        padding: 0 4px;
        border-right: 1px solid #800;
    }

    footer .search {
        flex: none;
        width: 13px;
        border: 0;
        border-left: 1px solid #800;
    }

    .ticker {
        flex: 1;
        padding-right: 68px;
        text-align: right;
        font-weight: bold;
        font-size: 13px;
        color: #ff0;
    }

    .promo {
        padding-right: 28px;
        font-weight: bold;
        font-size: 13px;
        color: #fff;
    }
</style>
